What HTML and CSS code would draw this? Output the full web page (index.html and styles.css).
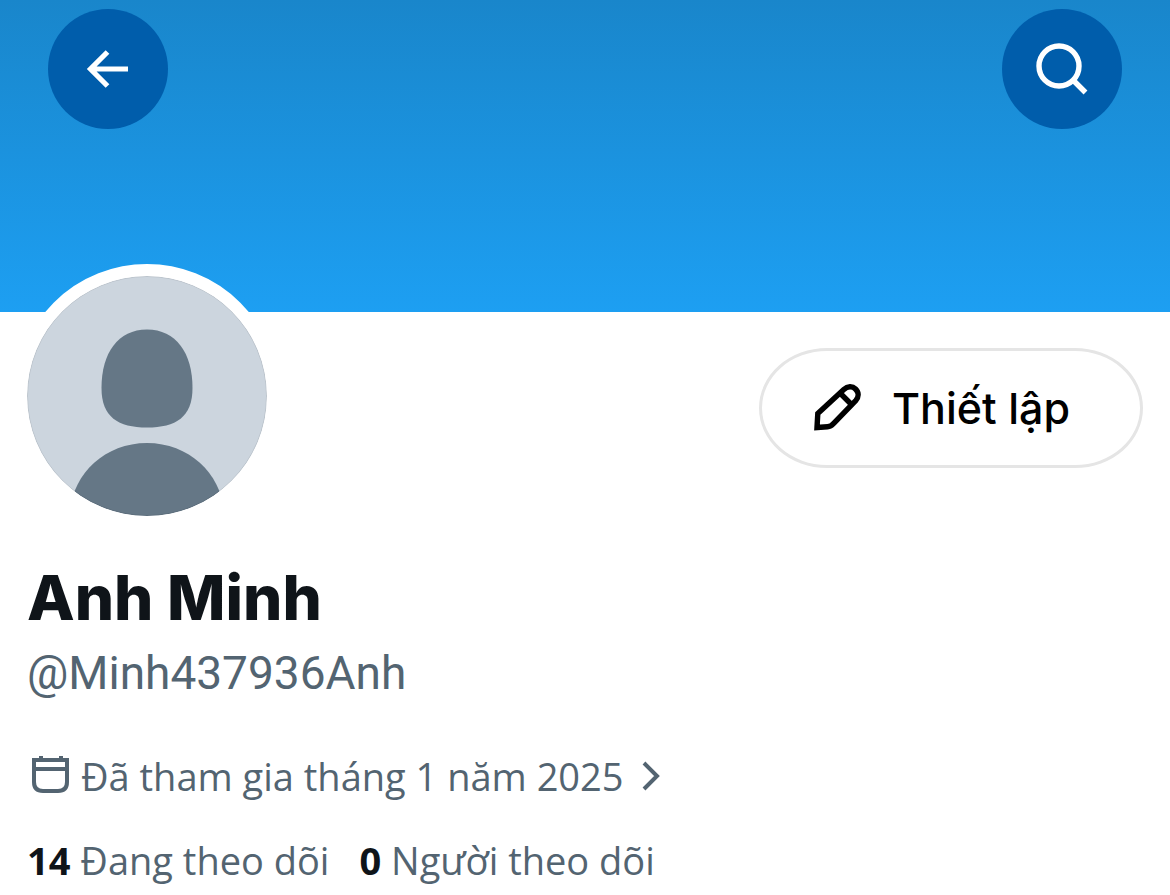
FILE: index.html
```html
<!DOCTYPE html>
<html lang="vi">
<head>
    <meta charset="UTF-8">
    <meta name="viewport" content="width=device-width, initial-scale=1.0">
    <title>Anh Minh (@Minh437936Anh)</title>
    <link rel="stylesheet" href="styles.css">
</head>
<body>
    <header class="banner">
        <button type="button" class="round-btn" aria-label="Quay lại">
            <svg width="120" height="120" viewBox="0 0 120 120" fill="none" stroke="#fff" stroke-width="5.200">
                <path d="M80 60H44M59.500 43L42.500 60L59.500 77"/>
            </svg>
        </button>
        <button type="button" class="round-btn" aria-label="Tìm kiếm">
            <svg width="120" height="120" viewBox="0 0 120 120" fill="none" stroke="#fff" stroke-width="5.400">
                <circle cx="57" cy="57" r="20"/>
                <path d="M71 71L83.500 83.500"/>
            </svg>
        </button>
    </header>

    <main class="profile">
        <div class="top-row">
            <svg class="avatar" viewBox="0 0 240 240">
                <defs>
                    <clipPath id="face"><circle cx="120" cy="120" r="120"/></clipPath>
                </defs>
                <g clip-path="url(#face)">
                    <rect width="240" height="240" fill="#ccd5de"/>
                    <path fill="#657786" d="M120 53.500C149 53.500 165.500 77 165.500 112C165.500 141 149 151.500 120 151.500C91 151.500 74.500 141 74.500 112C74.500 77 91 53.500 120 53.500Z"/>
                    <path fill="#657786" d="M43 240C43 201 76 167 120 167C164 167 197 201 197 240Z"/>
                </g>
                <circle cx="120" cy="120" r="119.500" fill="none" stroke="#000" stroke-opacity=".08"/>
            </svg>
            <button type="button" class="setup-btn">
                <svg width="48" height="48" viewBox="0 0 48 48" fill="none" stroke="#000" stroke-width="5.400">
                    <path d="M4 43.500L4.800 29.500L30.800 5.500C34.500 2 39.500 2 42.500 5C46 8.500 46 13 42.700 16.600L20.500 39.500Q18 42.500 14.500 42.800Z"/>
                    <path d="M27 9L38.500 20.500"/>
                </svg>
                Thiết lập
            </button>
        </div>

        <h1 class="name">Anh Minh</h1>
        <p class="handle">@Minh437936Anh</p>

        <a href="#" class="joined">
            <svg width="46" height="46" viewBox="0 0 46 46" fill="none" stroke="#536471" stroke-width="4">
                <path d="M7 7H40V29Q40 38 31 38H16Q7 38 7 29Z"/>
                <path d="M7 16H40M14 3V7M34 3V7"/>
            </svg>
            <span>Đã tham gia tháng 1 năm 2025</span>
            <svg width="22" height="32" viewBox="0 0 22 32" fill="none" stroke="#536471" stroke-width="4">
                <path d="M4 3L17 16L4 29"/>
            </svg>
        </a>

        <nav class="counts">
            <a href="#"><b>14</b> Đang theo dõi</a>
            <a href="#"><b>0</b> Người theo dõi</a>
        </nav>
    </main>
</body>
</html>
```
FILE: styles.css
```css
* {
    box-sizing: border-box;
}

body {
    margin: 0;
    background: #fff;
    color: #0f1419;
    font-family: "Open Sans", "Noto Sans", sans-serif;
}

a {
    color: inherit;
    text-decoration: none;
}

button {
    border: none;
    padding: 0;
    cursor: pointer;
}

/* blue header */
.banner {
    display: flex;
    justify-content: space-between;
    height: 312px;
    padding: 9px 48px;
    background: linear-gradient(#1986cb, #1d9ff2);
}

.round-btn {
    width: 120px;
    height: 120px;
    border-radius: 50%;
    background: #005dab;
}

.round-btn svg {
    display: block;
}

/* profile info */
.profile {
    padding: 0 27px;
    color: #536471;
}

.top-row {
    display: flex;
    justify-content: space-between;
    align-items: flex-start;
}

.avatar {
    width: 264px;
    height: 264px;
    margin: -48px 0 0 -12px;
    border: 12px solid #fff;
    border-radius: 50%;
    background: #fff;
}

.setup-btn {
    display: flex;
    align-items: center;
    gap: 31px;
    height: 120px;
    margin-top: 36px;
    padding: 0 70px 0 51px;
    border: 3px solid #e5e5e5;
    border-radius: 68px / 60px;
    background: #fff;
    color: #000;
    font: 500 43px Inter, "Noto Sans", sans-serif;
}

.name {
    margin: 30px 0 0;
    color: #0f1419;
    font: 800 62px/80px Inter, "Noto Sans", sans-serif;
}

.handle {
    margin: 0;
    font: 400 46px/70px Roboto, "Noto Sans", sans-serif;
}

.joined {
    display: flex;
    align-items: center;
    margin-top: 34px;
    font-size: 38px;
    line-height: 68px;
}

.joined span {
    margin: 0 16px 0 8px;
}

.counts {
    display: flex;
    gap: 30px;
    margin-top: 16px;
    font-size: 38px;
    line-height: 68px;
}

.counts b {
    color: #0f1419;
}
```
